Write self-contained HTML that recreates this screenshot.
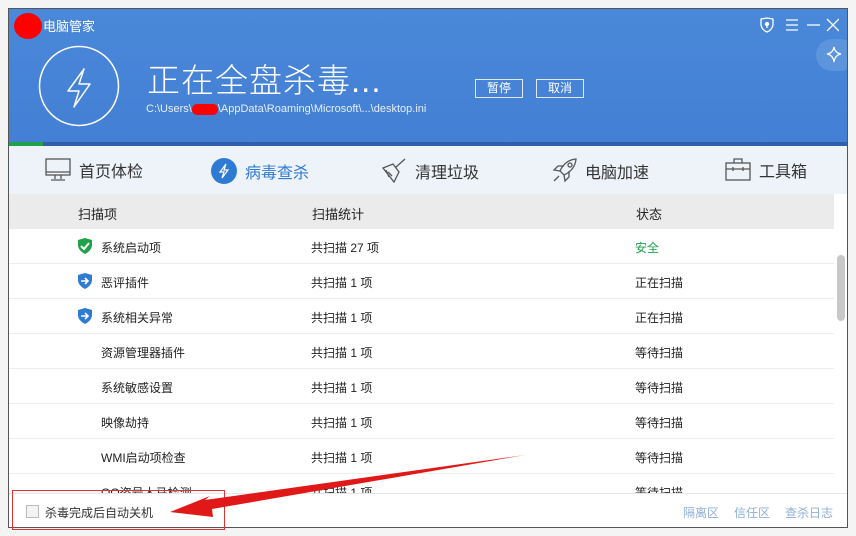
<!DOCTYPE html>
<html><head><meta charset="utf-8"><style>
*{margin:0;padding:0;box-sizing:border-box}
body{width:856px;height:536px;overflow:hidden;background:#f4f4f4;font-family:"Liberation Sans","Noto Sans CJK SC",sans-serif;position:relative}
.win{position:absolute;left:8px;top:8px;width:840px;height:520px;background:#fff;border:1px solid #555;overflow:hidden}
.hdr{position:absolute;left:0;top:0;width:840px;height:137px;background:linear-gradient(#4a88d9,#437fd4)}
.prog{position:absolute;left:0;top:133px;width:840px;height:4px;background:#2f5fa8}
.prog i{display:block;width:34px;height:4px;background:#1fa24a}
.nav{position:absolute;left:0;top:137px;width:840px;height:48px;background:#eef3fa}
.nav div{position:absolute;top:12px;font-size:16px;color:#333;display:flex;align-items:center;gap:8px}
.th{position:absolute;left:0;top:185px;width:825px;height:35px;background:#ebebeb;font-size:13px;color:#222}
.row{position:absolute;left:0;width:825px;height:35px;border-bottom:1px solid #eeeeee;font-size:12px;color:#222}
.c1{position:absolute;left:92px;top:10px}
.c2{position:absolute;left:302px;top:10px}
.c3{position:absolute;left:626px;top:10px}
.btn{position:absolute;top:70px;width:48px;height:19px;border:1px solid #dfe9f7;color:#fff;font-size:12px;text-align:center;line-height:17px}
.foot{position:absolute;left:0;top:484px;width:840px;height:36px;background:#fff;border-top:1px solid #e6e6e6}
</style></head><body>
<div class="win">
<div class="hdr">
 <div style="position:absolute;left:5px;top:4px;width:28px;height:26px;background:#f00;border-radius:50%"></div>
 <div style="position:absolute;left:34px;top:7px;color:#fff;font-size:13px">电脑管家</div>
 <svg style="position:absolute;left:29px;top:36px" width="82" height="82" viewBox="0 0 82 82"><circle cx="41" cy="41" r="39.5" fill="none" stroke="#fff" stroke-width="1.5"/><path d="M46 24 L30 46 L41 46 L36 62 L52 39 L41 39 Z" fill="none" stroke="#fff" stroke-width="1.5" stroke-linejoin="round"/></svg>
 <div style="position:absolute;left:138px;top:55px;color:#fff;font-size:33px;line-height:33px;font-weight:300;letter-spacing:1px;white-space:nowrap">正在全盘杀毒...</div>
 <div style="position:absolute;left:137px;top:94px;color:#e6eefa;font-size:11px;line-height:12px;white-space:nowrap">C:\Users\<span style="display:inline-block;width:26px;height:11px;background:#f00;border-radius:5px;vertical-align:middle"></span>\AppData\Roaming\Microsoft\...\desktop.ini</div>
 <div class="btn" style="left:466px">暂停</div>
 <div class="btn" style="left:527px">取消</div>
 <svg style="position:absolute;left:750px;top:8px" width="80" height="16" viewBox="0 0 80 16" fill="none" stroke="#fff" stroke-width="1.3"><path d="M2 2 L8 1 L14 2 L14 8 Q13 13 8 15 Q3 13 2 8 Z"/><circle cx="8" cy="7" r="1.5" fill="#fff"/><path d="M8 8v3"/><path d="M27 3h12M27 8h12M27 13h12"/><path d="M48 8h13"/><path d="M68 2l12 12M80 2L68 14"/></svg>
 <div style="position:absolute;left:807px;top:30px;width:40px;height:32px;border-radius:16px;background:#5c95dc"></div>
 <svg style="position:absolute;left:816px;top:35px" width="20" height="20" viewBox="0 0 20 20" fill="none" stroke="#fff" stroke-width="1.2"><path d="M9 3 Q10 9 16 10 Q10 11 9 18 Q8 11 2 10 Q8 9 9 3Z"/></svg>
</div>
<div class="prog"><i></i></div>
<div class="nav">
 <div style="left:36px"><svg width="26" height="24" viewBox="0 0 26 24" fill="none" stroke="#555" stroke-width="1.3"><rect x="1" y="1" width="24" height="16"/><path d="M1 14h24M10 17v4M16 17v4M6 22h14"/></svg>首页体检</div>
 <div style="left:202px;color:#2f7bd3"><svg width="26" height="26" viewBox="0 0 26 26"><circle cx="13" cy="13" r="13" fill="#2f7bd3"/><path d="M15 6 L9 14 L13 14 L11 20 L17 12 L13 12 Z" fill="none" stroke="#fff" stroke-width="1.2"/></svg>病毒查杀</div>
 <div style="left:372px"><svg width="26" height="26" viewBox="0 0 26 26" fill="none" stroke="#555" stroke-width="1.3"><path d="M24 1 L15 9 M2 10 L12 6 L18 14 L13 24 Z M7 14 L11 18 M5 12l3 7"/></svg>清理垃圾</div>
 <div style="left:542px"><svg width="26" height="26" viewBox="0 0 26 26" fill="none" stroke="#555" stroke-width="1.3"><path d="M25 1 Q14 2 9 13 L13 17 Q24 12 25 1Z M9 13 L3 12 L7 8 L13 8 M13 17 L14 23 L18 19 L18 13 M8 18 L3 23"/><circle cx="19" cy="7" r="2"/></svg>电脑加速</div>
 <div style="left:716px"><svg width="26" height="24" viewBox="0 0 26 24" fill="none" stroke="#555" stroke-width="1.3"><rect x="1" y="5" width="24" height="17"/><path d="M9 5V1h8v4M1 11h24M8 9v4M18 9v4"/></svg>工具箱</div>
</div>
<div class="th"><span style="position:absolute;left:69px;top:10px">扫描项</span><span style="position:absolute;left:303px;top:10px">扫描统计</span><span style="position:absolute;left:627px;top:10px">状态</span></div>
<div class="row" style="top:220px"><svg style="position:absolute;left:68px;top:9px" width="16" height="16" viewBox="0 0 16 16"><path d="M1 2 L8 0 L15 2 L15 8 Q14 13 8 16 Q2 13 1 8Z" fill="#1fa24a"/><path d="M4 8 L7 11 L12 5" fill="none" stroke="#fff" stroke-width="2"/></svg><span class="c1">系统启动项</span><span class="c2">共扫描 27 项</span><span class="c3" style="color:#1fa24a">安全</span></div>
<div class="row" style="top:255px"><svg style="position:absolute;left:68px;top:9px" width="16" height="16" viewBox="0 0 16 16"><path d="M1 2 L8 0 L15 2 L15 8 Q14 13 8 16 Q2 13 1 8Z" fill="#2f7bd3"/><path d="M4 8h7M8 5l3 3-3 3" fill="none" stroke="#fff" stroke-width="1.6"/></svg><span class="c1">恶评插件</span><span class="c2">共扫描 1 项</span><span class="c3">正在扫描</span></div>
<div class="row" style="top:290px"><svg style="position:absolute;left:68px;top:9px" width="16" height="16" viewBox="0 0 16 16"><path d="M1 2 L8 0 L15 2 L15 8 Q14 13 8 16 Q2 13 1 8Z" fill="#2f7bd3"/><path d="M4 8h7M8 5l3 3-3 3" fill="none" stroke="#fff" stroke-width="1.6"/></svg><span class="c1">系统相关异常</span><span class="c2">共扫描 1 项</span><span class="c3">正在扫描</span></div>
<div class="row" style="top:325px"><span class="c1">资源管理器插件</span><span class="c2">共扫描 1 项</span><span class="c3">等待扫描</span></div>
<div class="row" style="top:360px"><span class="c1">系统敏感设置</span><span class="c2">共扫描 1 项</span><span class="c3">等待扫描</span></div>
<div class="row" style="top:395px"><span class="c1">映像劫持</span><span class="c2">共扫描 1 项</span><span class="c3">等待扫描</span></div>
<div class="row" style="top:430px"><span class="c1">WMI启动项检查</span><span class="c2">共扫描 1 项</span><span class="c3">等待扫描</span></div>
<div class="row" style="top:465px"><span class="c1">QQ盗号木马检测</span><span class="c2">共扫描 1 项</span><span class="c3">等待扫描</span></div>
<div style="position:absolute;left:828px;top:246px;width:8px;height:66px;background:#c8c8c8;border-radius:4px"></div>
<div class="foot">
 <div style="position:absolute;left:17px;top:11px;width:13px;height:13px;border:1px solid #bbb;background:#f3f3f3"></div>
 <span style="position:absolute;left:36px;top:10px;font-size:12px;color:#333">杀毒完成后自动关机</span>
 <span style="position:absolute;left:674px;top:10px;font-size:12px;color:#8fb0d6">隔离区</span>
 <span style="position:absolute;left:725px;top:10px;font-size:12px;color:#8fb0d6">信任区</span>
 <span style="position:absolute;left:776px;top:10px;font-size:12px;color:#8fb0d6">查杀日志</span>
</div>
</div>
<div style="position:absolute;left:12px;top:490px;width:213px;height:40px;border:1px solid #d33"></div>
<svg style="position:absolute;left:0;top:0" width="856" height="536"><path d="M525 455 L205 500 L210 496 L170 512 L213 517 L212 509 Z" fill="#e01818"/></svg>
</body></html>
